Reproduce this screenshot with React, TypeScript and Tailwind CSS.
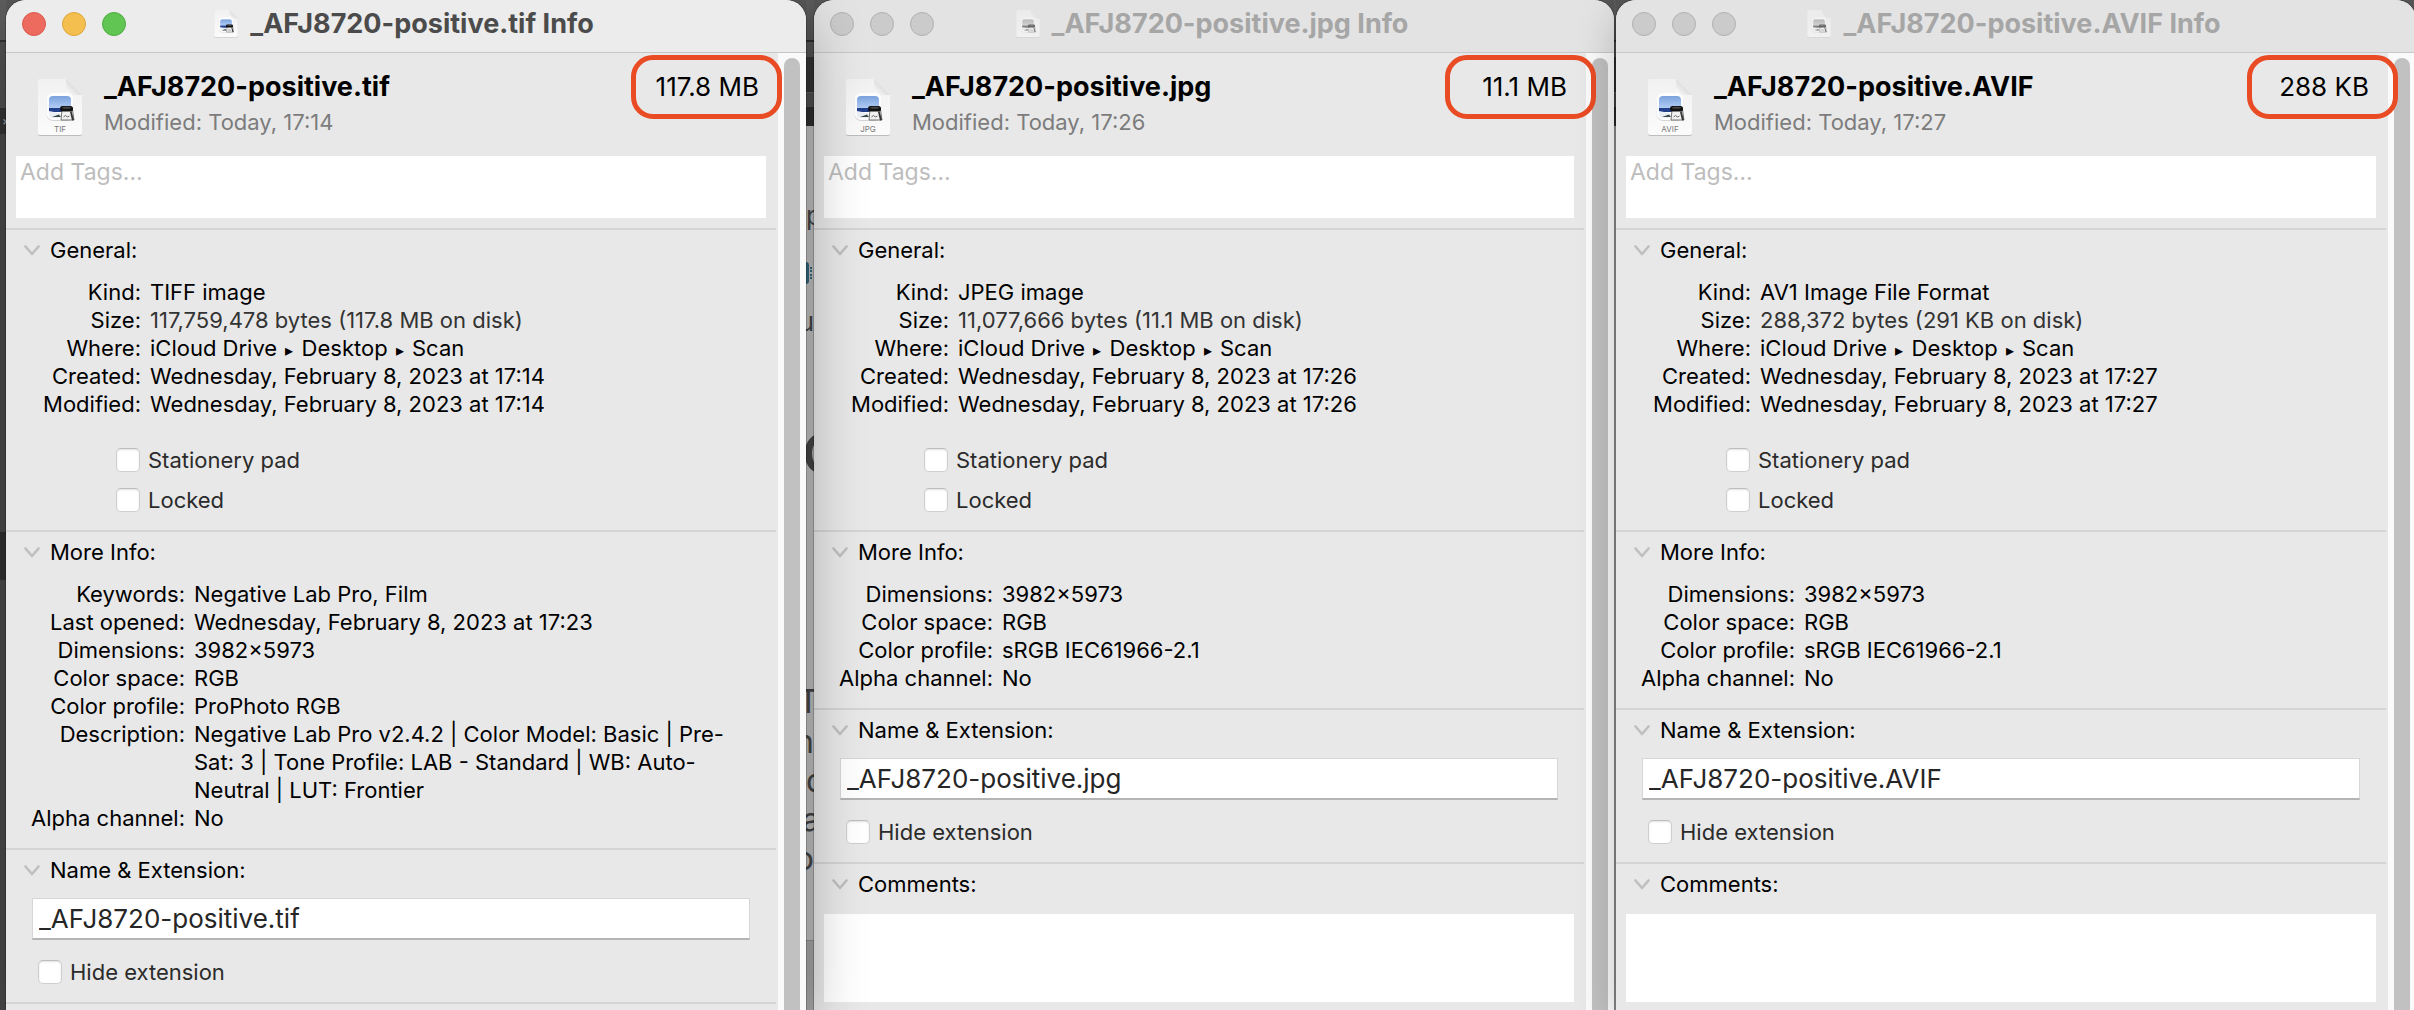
import { Fragment, useId, type ReactNode } from "react";

type Row = { label: string; value: ReactNode; muted?: boolean };

type FileInfo = {
  file: string;
  badge: string;
  size: string;
  time: string;
  active: boolean;
  general: Row[];
  more: Row[];
  comments: boolean;
  windowClass: string;
  ringClass: string;
};

function Breadcrumb({ parts }: { parts: string[] }) {
  return (
    <>
      {parts.map((part, i) => (
        <Fragment key={part}>
          {i > 0 && (
            <>
              {" "}
              <span className="px-0.5 text-base leading-4">▸</span>{" "}
            </>
          )}
          {part}
        </Fragment>
      ))}
    </>
  );
}

const WHERE = <Breadcrumb parts={["iCloud Drive", "Desktop", "Scan"]} />;

const files: FileInfo[] = [
  {
    file: "_AFJ8720-positive.tif",
    badge: "TIF",
    size: "117.8 MB",
    time: "17:14",
    active: true,
    general: [
      { label: "Kind:", value: "TIFF image" },
      { label: "Size:", value: "117,759,478 bytes (117.8 MB on disk)", muted: true },
      { label: "Where:", value: WHERE },
      { label: "Created:", value: "Wednesday, February 8, 2023 at 17:14" },
      { label: "Modified:", value: "Wednesday, February 8, 2023 at 17:14" },
    ],
    more: [
      { label: "Keywords:", value: "Negative Lab Pro, Film" },
      { label: "Last opened:", value: "Wednesday, February 8, 2023 at 17:23" },
      { label: "Dimensions:", value: "3982×5973" },
      { label: "Color space:", value: "RGB" },
      { label: "Color profile:", value: "ProPhoto RGB" },
      {
        label: "Description:",
        value:
          "Negative Lab Pro v2.4.2 | Color Model: Basic | Pre-Sat: 3 | Tone Profile: LAB - Standard | WB: Auto-Neutral | LUT: Frontier",
      },
      { label: "Alpha channel:", value: "No" },
    ],
    comments: false,
    windowClass: "z-30 shadow-[0_20px_60px_rgba(0,0,0,0.32),0_0_0_1px_rgba(0,0,0,0.2)]",
    ringClass: "-right-[23px]",
  },
  {
    file: "_AFJ8720-positive.jpg",
    badge: "JPG",
    size: "11.1 MB",
    time: "17:26",
    active: false,
    general: [
      { label: "Kind:", value: "JPEG image" },
      { label: "Size:", value: "11,077,666 bytes (11.1 MB on disk)", muted: true },
      { label: "Where:", value: WHERE },
      { label: "Created:", value: "Wednesday, February 8, 2023 at 17:26" },
      { label: "Modified:", value: "Wednesday, February 8, 2023 at 17:26" },
    ],
    more: [
      { label: "Dimensions:", value: "3982×5973" },
      { label: "Color space:", value: "RGB" },
      { label: "Color profile:", value: "sRGB IEC61966-2.1" },
      { label: "Alpha channel:", value: "No" },
    ],
    comments: true,
    windowClass: "z-10 shadow-[0_12px_40px_rgba(0,0,0,0.22),0_0_0_1px_rgba(0,0,0,0.2)]",
    ringClass: "-right-[29px]",
  },
  {
    file: "_AFJ8720-positive.AVIF",
    badge: "AVIF",
    size: "288 KB",
    time: "17:27",
    active: false,
    general: [
      { label: "Kind:", value: "AV1 Image File Format" },
      { label: "Size:", value: "288,372 bytes (291 KB on disk)", muted: true },
      { label: "Where:", value: WHERE },
      { label: "Created:", value: "Wednesday, February 8, 2023 at 17:27" },
      { label: "Modified:", value: "Wednesday, February 8, 2023 at 17:27" },
    ],
    more: [
      { label: "Dimensions:", value: "3982×5973" },
      { label: "Color space:", value: "RGB" },
      { label: "Color profile:", value: "sRGB IEC61966-2.1" },
      { label: "Alpha channel:", value: "No" },
    ],
    comments: true,
    windowClass: "z-20 -mr-0.5 shadow-[0_12px_40px_rgba(0,0,0,0.22),0_0_0_1px_rgba(0,0,0,0.2)]",
    ringClass: "-right-[29px]",
  },
];

function DocumentIcon({ badge, className }: { badge?: string; className: string }) {
  const id = useId();
  return (
    <svg viewBox={badge ? "0 0 44 58" : "0 0 44 52"} className={className} aria-hidden="true">
      <defs>
        <linearGradient id={`${id}p`} x1="0" y1="0" x2="0" y2="1">
          <stop offset="0" stopColor="#f1f1f1" />
          <stop offset="1" stopColor="#fbfbfb" />
        </linearGradient>
        <linearGradient id={`${id}s`} x1="0" y1="0" x2="0" y2="1">
          <stop offset="0" stopColor="#7ba2dd" />
          <stop offset="1" stopColor="#b4cff5" />
        </linearGradient>
        <linearGradient id={`${id}f`} x1="0" y1="1" x2="1" y2="0">
          <stop offset="0" stopColor="#ffffff" />
          <stop offset="0.5" stopColor="#dedede" />
        </linearGradient>
        <clipPath id={`${id}c`}>
          <rect x="11" y="17" width="22" height="22" rx="4" />
        </clipPath>
      </defs>
      <path d={badge ? "M2 1h26l16 16v38a2 2 0 0 1-2 2H2a2 2 0 0 1-2-2V3a2 2 0 0 1 2-2z" : "M2 1h26l16 16v32a2 2 0 0 1-2 2H2a2 2 0 0 1-2-2V3a2 2 0 0 1 2-2z"} fill="#bdbdbd" />
      <path d={badge ? "M2 0h26l16 16v38a2 2 0 0 1-2 2H2a2 2 0 0 1-2-2V2a2 2 0 0 1 2-2z" : "M2 0h26l16 16v32a2 2 0 0 1-2 2H2a2 2 0 0 1-2-2V2a2 2 0 0 1 2-2z"} fill={`url(#${id}p)`} />
      <path d="M28 0l16 16H30a2 2 0 0 1-2-2z" fill={`url(#${id}f)`} />
      <rect x="8.500" y="15" width="27" height="27" rx="6.500" fill="#d5d5d5" />
      <rect x="8.500" y="14" width="27" height="27" rx="6.500" fill="#fdfdfd" />
      <g clipPath={`url(#${id}c)`}>
        <rect x="11" y="17" width="22" height="13" fill={`url(#${id}s)`} />
        <rect x="11" y="29" width="22" height="4" fill="#23408c" />
        <path d="M11 32l10 2 4 3-5 2H11z" fill="#e9eff5" />
        <path d="M14 38l7-2.500 2 2.500z" fill="#3d4a4a" />
      </g>
      <path d="M24 31h10.500l1.500 10h-13z" fill="#f1f1f1" stroke="#555" strokeWidth="0.800" />
      <path d="M33.500 32l2.500 9-2 .5-2-8.500z" fill="#333" />
      <path d="M25.500 38l2-1.500 2 1.500 2-1" stroke="#666" strokeWidth="1" fill="none" />
      <rect x="22" y="27" width="13" height="5.500" rx="2.500" fill="#111" />
      <ellipse cx="28.500" cy="28.800" rx="4.500" ry="1" fill="#444" />
      {badge && (
        <text x="22" y="53" textAnchor="middle" fontSize="8" fill="#7b7b7b" fontFamily="Inter, sans-serif">
          {badge}
        </text>
      )}
    </svg>
  );
}

function Section({ title, children }: { title: string; children: ReactNode }) {
  return (
    <section className="border-t-2 border-[#d4d4d4] pt-1.5">
      <h2>
        <button type="button" className="flex w-full items-center gap-2.5 pl-[18px] text-left">
          <svg viewBox="0 0 16 11" className="h-[11px] w-4" fill="none" stroke="#bfbfbf" strokeWidth="2.600" strokeLinecap="round" strokeLinejoin="round" aria-hidden="true">
            <path d="M1.500 1.500L8 9l6.500-7.500" />
          </svg>
          {title}
        </button>
      </h2>
      {children}
    </section>
  );
}

function Rows({ rows, columns }: { rows: Row[]; columns: string }) {
  return (
    <dl className={`mt-3.5 grid gap-x-[9px] pr-6 ${columns}`}>
      {rows.map((row) => (
        <Fragment key={row.label}>
          <dt className="text-right">{row.label}</dt>
          <dd className={row.muted ? "text-[#333333]" : undefined}>{row.value}</dd>
        </Fragment>
      ))}
    </dl>
  );
}

function Check({ children }: { children: string }) {
  return (
    <label className="flex w-fit items-center gap-2 leading-6 text-[#2b2b2b]">
      <input
        type="checkbox"
        className="size-6 appearance-none rounded-[5px] border border-[#cfcfcf] border-t-[#bdbdbd] bg-white shadow-[inset_0_1px_2px_rgba(0,0,0,0.12)] checked:bg-[#0a7aff]"
      />
      {children}
    </label>
  );
}

function TrafficLights({ active }: { active: boolean }) {
  const tone = active
    ? ["bg-[#ed6a5e] border-[#d9584d]", "bg-[#f5bf4f] border-[#dba63c]", "bg-[#61c554] border-[#4fac43]"]
    : ["bg-[#cbcbcb] border-[#b0b0b0]", "bg-[#cbcbcb] border-[#b0b0b0]", "bg-[#cbcbcb] border-[#b0b0b0]"];
  return (
    <div className="flex gap-4 pl-4">
      {["Close", "Minimize", "Zoom"].map((name, i) => (
        <button key={name} type="button" aria-label={name} className={`size-6 rounded-full border ${tone[i]}`} />
      ))}
    </div>
  );
}

function InfoWindow({ info }: { info: FileInfo }) {
  return (
    <article className={`relative flex min-w-0 flex-1 flex-col overflow-hidden rounded-t-[20px] bg-[#e8e8e8] ${info.windowClass}`}>
      <header
        className={`grid h-[53px] grid-cols-[1fr_auto_1fr] items-center border-b pb-1 ${
          info.active ? "border-[#c6c6c6] bg-[#ececec]" : "border-[#c8c8c8] bg-[#e3e3e3]"
        }`}
      >
        <TrafficLights active={info.active} />
        <div className="flex items-center gap-3 pr-1">
          <DocumentIcon className={info.active ? "h-7 w-6" : "h-7 w-6 opacity-60 grayscale"} />
          <h1 className={`text-[27px] leading-8 font-bold ${info.active ? "text-[#4b4b4b]" : "text-[#a6a6a6]"}`}>{info.file} Info</h1>
        </div>
      </header>

      <div className="flex flex-1">
        <div className="mr-0.5 min-w-0 flex-1">
          <div className="flex items-start pt-4 pr-[17px] pl-8">
            <DocumentIcon badge={info.badge} className="mt-2.5 h-[58px] w-11 shrink-0" />
            <div className="ml-[22px] flex-1">
              <p className="text-[27px] leading-9 font-bold">{info.file}</p>
              <p className="mt-[3px] text-[#7c7c7c]">Modified: Today, {info.time}</p>
            </div>
            <p className="relative text-[26px] leading-9">
              {info.size}
              <span className={`absolute -top-3.5 h-16 w-[151px] rounded-[22px] border-5 border-[#e94b24] ${info.ringClass}`} />
            </p>
          </div>
          <textarea
            aria-label="Tags"
            placeholder="Add Tags…"
            className="mx-2.5 mt-[19px] mb-2.5 block h-[62px] w-[calc(100%-20px)] resize-none bg-white px-1 pt-0.5 text-[23px] leading-7 placeholder:text-[#bdbdbd]"
          />

          <Section title="General:">
            <Rows rows={info.general} columns="grid-cols-[135px_1fr]" />
            <div className="mt-[30px] flex flex-col gap-4 pb-[18px] pl-[110px]">
              <Check>Stationery pad</Check>
              <Check>Locked</Check>
            </div>
          </Section>

          <Section title="More Info:">
            <Rows rows={info.more} columns="grid-cols-[179px_1fr]" />
            <div className="h-4" />
          </Section>

          <Section title="Name & Extension:">
            <div className="mt-3.5 px-[26px] pb-[18px]">
              <input
                type="text"
                aria-label="Name and extension"
                defaultValue={info.file}
                className="block h-[42px] w-full border border-[#d6d6d6] border-b-2 border-b-[#b4b4b4] bg-white px-1.5 text-[26px] leading-8 text-[#262626]"
              />
              <div className="mt-5 pl-1.5">
                <Check>Hide extension</Check>
              </div>
            </div>
          </Section>

          {info.comments ? (
            <Section title="Comments:">
              <textarea aria-label="Comments" className="mx-2.5 mt-4 block h-[88px] w-[calc(100%-20px)] resize-none bg-white px-1" />
            </Section>
          ) : (
            <div className="border-t-2 border-[#d4d4d4]" />
          )}
        </div>

        <div className="flex w-7 flex-col bg-[#fafafa] pt-[5px] pl-1.5">
          <div className="w-4 flex-1 rounded-t-full bg-[#c1c1c1]" />
        </div>
      </div>
    </article>
  );
}

/* Slivers of the desktop that stay visible between the windows. */
function DarkBands() {
  return (
    <>
      <div className="h-10 bg-linear-to-b from-[#5e5e5e] to-[#585858]" />
      <div className="h-0.5 bg-[#2e2e2e]" />
      <div className="h-[15px] bg-[#585858]" />
      <div className="h-[35px] bg-[#383838]" />
      <div className="h-[15px] border-t border-[#6a6a6a] bg-[#565656]" />
      <div className="h-[19px] bg-[#323232]" />
    </>
  );
}

function LeftSliver() {
  return (
    <div className="flex w-1.5 flex-col overflow-hidden text-xs leading-[26px] text-[#b5b5b5]">
      <div className="h-10 bg-[#5e5e5e]" />
      <div className="h-0.5 bg-[#333333]" />
      <div className="h-[66px] bg-[#525252]" />
      <div className="h-[26px] bg-[#343434] pl-0.5">×</div>
      <div className="h-[398px] bg-[#4a4a4a]" />
      <div className="h-12 bg-[#303030]" />
      <div className="flex-1 bg-[#4a4a4a]" />
    </div>
  );
}

function MiddleSliver() {
  return (
    <div className="relative flex w-2 flex-col overflow-hidden bg-[#c9c9c9] text-[26px] leading-8 text-[#4a4a4a]">
      <DarkBands />
      <div className="flex-1 bg-[#cfcfcf]" />
      <div className="h-[70px] border-t border-[#999999] bg-[#b3b3b3]" />
      <span className="absolute top-[200px] left-0">p</span>
      <span className="absolute top-[262px] left-0 h-[22px] w-[3px] rounded-r bg-[#376f86]" />
      <span className="absolute top-[267px] left-1 h-3 border-l-2 border-dotted border-[#376f86]" />
      <span className="absolute top-[306px] right-0">u</span>
      <span className="absolute top-[422px] -left-1 text-[56px] leading-[64px] font-semibold">C</span>
      <span className="absolute top-[686px] -left-2 text-[32px]">T</span>
      <span className="absolute top-[726px] right-0 text-[32px]">n</span>
      <span className="absolute top-[765px] left-0 text-[32px]">d</span>
      <span className="absolute top-[804px] -left-1 text-[32px]">a</span>
      <span className="absolute top-[843px] right-0 text-[32px]">o</span>
    </div>
  );
}

export default function App() {
  const [tif, jpg, avif] = files;
  return (
    <main className="flex min-h-screen overflow-hidden bg-[#585858] font-[Inter,'Liberation_Sans',sans-serif] text-[22px] leading-7 text-black">
      <LeftSliver />
      <InfoWindow info={tif} />
      <MiddleSliver />
      <InfoWindow info={jpg} />
      <div className="flex w-0.5 flex-col bg-[#b5b5b5]">
        <DarkBands />
      </div>
      <InfoWindow info={avif} />
    </main>
  );
}
